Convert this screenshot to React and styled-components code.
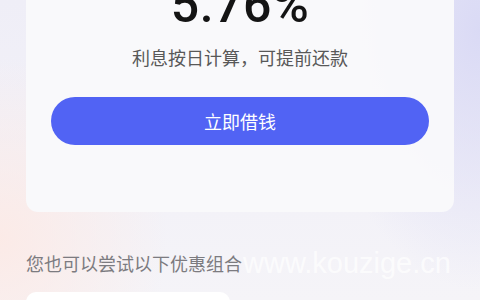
import React from "react";
import styled, { createGlobalStyle } from "styled-components";

const GlobalStyle = createGlobalStyle`
  html, body {
    margin: 0;
    padding: 0;
  }
  body {
    font-family: "Noto Sans CJK SC", "Noto Sans", sans-serif;
    background: #f4f3f8;
  }
`;

const Page = styled.div`
  position: relative;
  width: 480px;
  height: 300px;
  overflow: hidden;
  box-sizing: border-box;
  padding: 0 26px;
  background:
    radial-gradient(ellipse 240px 260px at 0% 80%, rgba(252, 234, 230, 0.95), rgba(252, 234, 230, 0) 70%),
    radial-gradient(ellipse 160px 260px at 100% 10%, rgba(218, 218, 245, 1), rgba(218, 218, 245, 0) 100%),
    linear-gradient(to bottom, #efeef7 0%, #f3f2f8 70%, #f5f4f8 100%);
`;

const Card = styled.div`
  margin-top: -40px;
  padding: 20px 25px 67px;
  background: rgba(249, 249, 251, 0.96);
  border-radius: 12px;
  display: flex;
  flex-direction: column;
  align-items: center;
`;

const Rate = styled.div`
  font-family: "Roboto", "Liberation Sans", sans-serif;
  font-weight: 500;
  font-size: 50px;
  line-height: 50px;
  color: #141414;
  letter-spacing: 0.5px;
`;

const Note = styled.div`
  margin-top: 15px;
  font-size: 18px;
  line-height: 24px;
  color: #585858;
`;

const BorrowButton = styled.button`
  margin-top: 28px;
  width: 100%;
  height: 48px;
  border: none;
  border-radius: 24px;
  background: #5163f4;
  color: #ffffff;
  font-family: "Noto Sans CJK SC", sans-serif;
  font-size: 18px;
  cursor: pointer;
`;

const SectionTitle = styled.div`
  margin-top: 39px;
  font-size: 18px;
  line-height: 24px;
  color: #7c7b80;
`;

const OfferGrid = styled.div`
  margin-top: 17px;
  display: grid;
  grid-template-columns: 204px 1fr;
  gap: 20px;
`;

const OfferCard = styled.div`
  height: 90px;
  background: #ffffff;
  border-radius: 10px;
`;

const Watermark = styled.div`
  position: absolute;
  left: 243px;
  top: 246px;
  font-family: "Liberation Sans", sans-serif;
  font-size: 29px;
  line-height: 34px;
  color: rgba(255, 255, 255, 0.7);
  pointer-events: none;
`;

export default function App() {
  return (
    <>
      <GlobalStyle />
      <Page>
        <Card>
          <Rate>5.76%</Rate>
          <Note>利息按日计算，可提前还款</Note>
          <BorrowButton>立即借钱</BorrowButton>
        </Card>
        <SectionTitle>您也可以尝试以下优惠组合</SectionTitle>
        <OfferGrid>
          <OfferCard />
        </OfferGrid>
        <Watermark>www.kouzige.cn</Watermark>
      </Page>
    </>
  );
}
